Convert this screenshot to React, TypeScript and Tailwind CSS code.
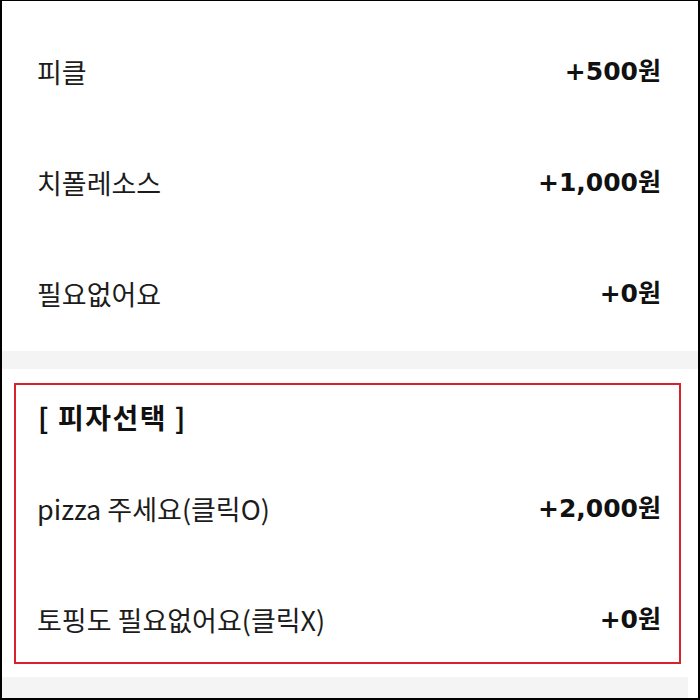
import React from "react";

type Option = {
  name: string;
  price: string;
};

const sauces: Option[] = [
  { name: "피클", price: "+500원" },
  { name: "치폴레소스", price: "+1,000원" },
  { name: "필요없어요", price: "+0원" },
];

const pizzas: Option[] = [
  { name: "pizza 주세요(클릭O)", price: "+2,000원" },
  { name: "토핑도 필요없어요(클릭X)", price: "+0원" },
];

function OptionRow({ option }: { option: Option }) {
  return (
    <div className="flex h-[111px] items-center justify-between pb-[5px] pl-[35px] pr-[37px]">
      <span className="text-[27px] leading-none text-[#1c1c1c]">{option.name}</span>
      <span
        className="text-[25px] font-bold leading-none text-[#111111]"
        style={{ fontFamily: '"DejaVu Sans", "Noto Sans CJK KR", sans-serif' }}
      >
        {option.price}
      </span>
    </div>
  );
}

export default function App() {
  return (
    <div
      className="relative h-[700px] w-[700px] overflow-hidden border-x-2 border-b-2 border-t border-black bg-white"
      style={{ fontFamily: '"Noto Sans CJK KR", "Noto Sans", sans-serif' }}
    >
      <div className="pt-[17px]">
        {sauces.map((s) => (
          <OptionRow key={s.name} option={s} />
        ))}
      </div>

      <div className="h-[18px] bg-[#f4f4f4]" />

      <div>
        <div className="flex h-[86px] items-center pl-[36px] pt-[10px]">
          <h2 className="text-[28px] font-bold leading-none tracking-[1.5px] text-[#111111]">
            [ 피자선택 ]
          </h2>
        </div>
        {pizzas.map((p) => (
          <OptionRow key={p.name} option={p} />
        ))}
      </div>

      <div className="mr-[10px] h-[30px] bg-[#f4f4f4]" />

      {/* red highlight box */}
      <div className="pointer-events-none absolute left-[12px] top-[382px] h-[281px] w-[667px] border-2 border-[#d8232a]" />
    </div>
  );
}
